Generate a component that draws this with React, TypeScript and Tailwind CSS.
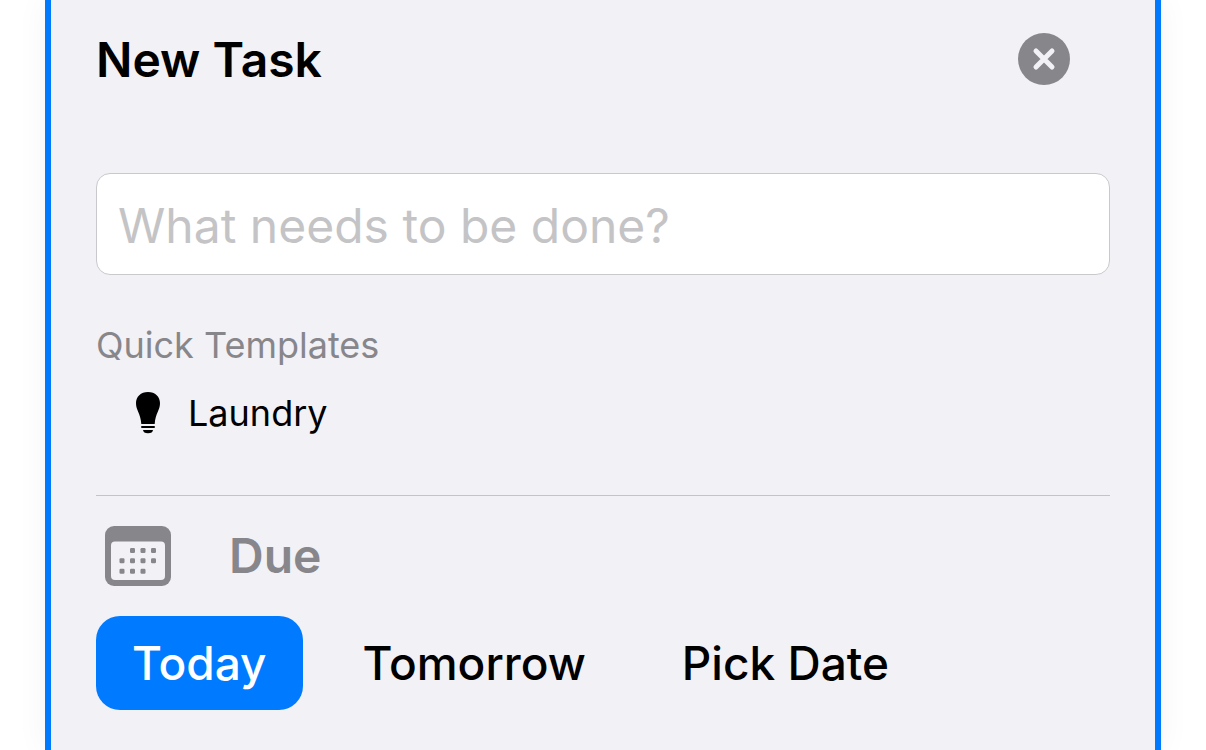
import { useState } from 'react';

const templates = ['Laundry'];
const dueOptions = ['Today', 'Tomorrow', 'Pick Date'];

function CloseIcon() {
  return (
    <svg viewBox="0 0 52 52" className="w-[52px] h-[52px]" aria-hidden="true">
      <circle cx="26" cy="26" r="26" fill="#87868b" />
      <path d="M18 18 34 34M34 18 18 34" stroke="#f2f1f6" strokeWidth="5" strokeLinecap="round" />
    </svg>
  );
}

function BulbIcon() {
  return (
    <svg viewBox="0 0 24 42" className="w-6 h-[42px]" aria-hidden="true">
      <path d="M12 0C4.8 0 0 4.8 0 11.2c0 7 4.6 9.8 5.3 20.8h13.4C19.4 21 24 18.2 24 11.2 24 4.8 19.200 0 12 0Z" />
      <rect x="5" y="34" width="14" height="2" rx="1" />
      <path d="M7 38h10c0 2-2 3.300-5 3.300s-5-1.300-5-3.300Z" />
    </svg>
  );
}

function CalendarIcon() {
  const dots = [
    [25, 22], [35.5, 22], [46, 22],
    [14.5, 32.3], [25, 32.3], [35.5, 32.3], [46, 32.3],
    [14.5, 42.7], [25, 42.7], [35.5, 42.7],
  ];
  return (
    <svg viewBox="0 0 66 60" className="w-[66px] h-[60px]" fill="#87868b" aria-hidden="true">
      <rect width="66" height="60" rx="9" />
      <rect x="6" y="15.5" width="54" height="38.5" rx="4" fill="#f2f1f6" />
      {dots.map(([x, y]) => (
        <rect key={`${x}-${y}`} x={x} y={y} width="5" height="5" rx="1.2" />
      ))}
    </svg>
  );
}

export default function App() {
  const [task, setTask] = useState('');
  const [due, setDue] = useState('Today');

  return (
    <div className="min-h-screen flex bg-white px-[45px] font-['Inter','Liberation_Sans',sans-serif] text-black">
      <main className="flex-1 min-w-0 bg-[#f2f1f6] border-x-[6px] border-[#007aff] shadow-[0_0_30px_rgba(0,0,0,0.05)] px-[45px] pt-[30px] pb-10">
        <header className="flex items-start justify-between pr-10">
          <h1 className="text-[48px] leading-[60px] font-semibold">New Task</h1>
          <button type="button" aria-label="Close" className="mt-[3px] rounded-full">
            <CloseIcon />
          </button>
        </header>

        <input
          type="text"
          aria-label="Task name"
          value={task}
          onChange={(e) => setTask(e.target.value)}
          placeholder="What needs to be done?"
          className="block mt-[83px] w-full h-[102px] rounded-[14px] border border-[#c9c8cd] bg-white px-[21px] pt-0.5 text-[48px] outline-none placeholder:text-[#c4c4c6]"
        />

        <section className="mt-12">
          <h2 className="text-[36px] leading-[44px] text-[#87868b]">Quick Templates</h2>
          {templates.map((name) => (
            <button
              key={name}
              type="button"
              onClick={() => setTask(name)}
              className="mt-6 ml-10 flex items-center gap-7 text-[36px] leading-[44px]"
            >
              <BulbIcon />
              {name}
            </button>
          ))}
        </section>

        <section className="mt-[60px] border-t border-[#c4c4c8] pt-[30px]">
          <div className="flex items-center gap-[58px] pl-[9px]">
            <CalendarIcon />
            <h2 className="text-[48px] leading-[60px] font-semibold text-[#87868b]">Due</h2>
          </div>
          <div className="mt-[30px] flex flex-wrap gap-6">
            {dueOptions.map((option) => (
              <button
                key={option}
                type="button"
                aria-pressed={due === option}
                onClick={() => setDue(option)}
                className={`h-[94px] px-9 rounded-3xl text-[46px] font-medium ${due === option ? 'bg-[#007aff] text-white' : ''}`}
              >
                {option}
              </button>
            ))}
          </div>
        </section>
      </main>
    </div>
  );
}
